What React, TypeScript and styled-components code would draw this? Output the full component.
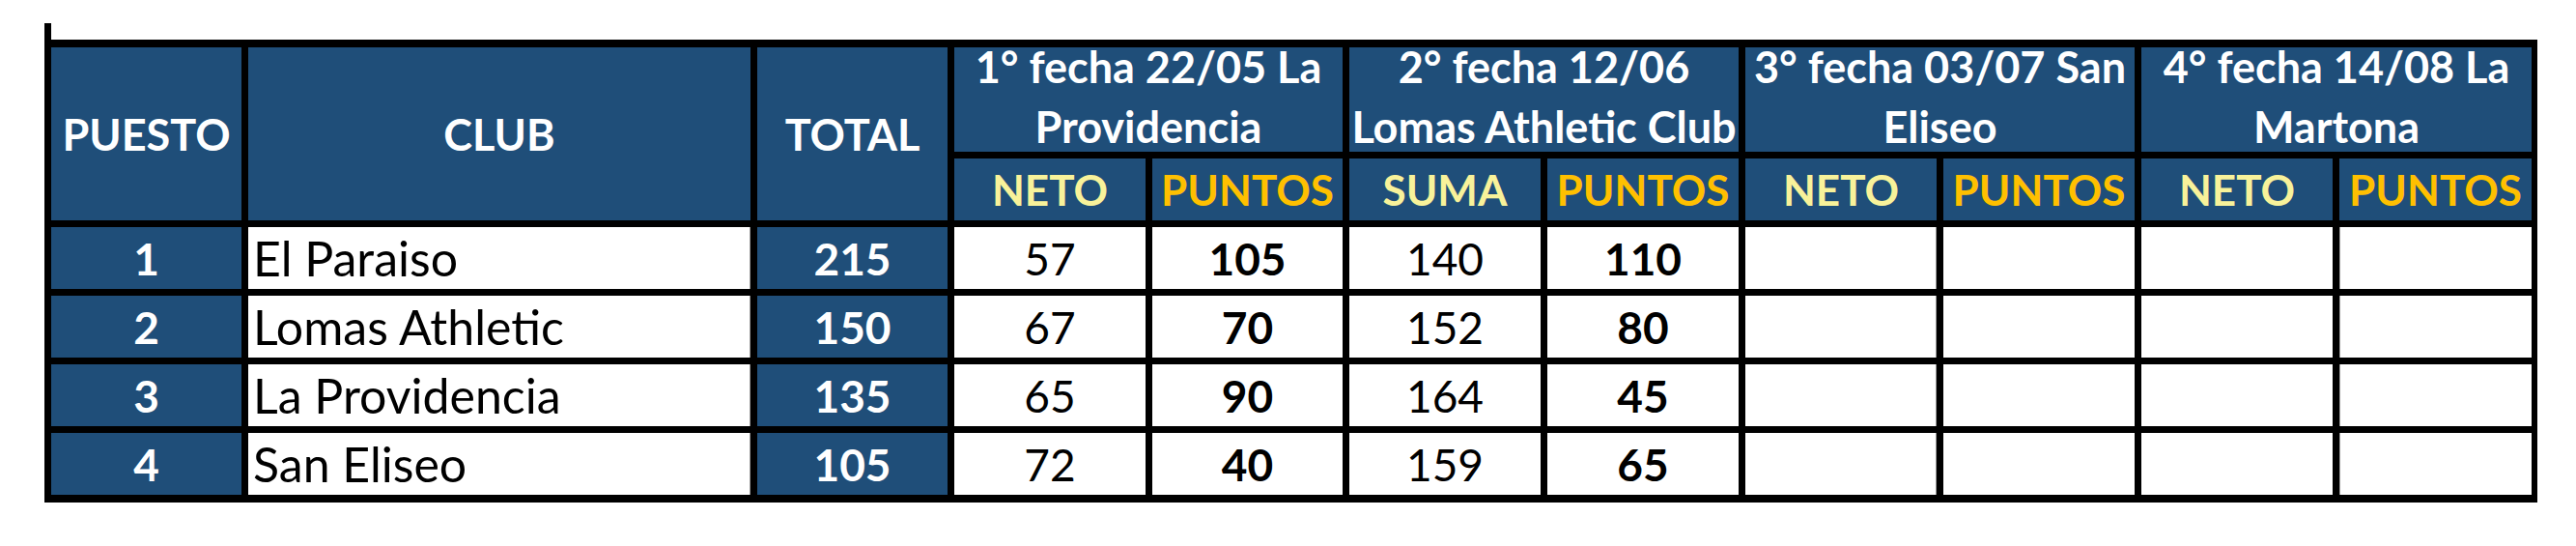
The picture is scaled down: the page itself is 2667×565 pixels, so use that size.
import React from "react";
import styled, { createGlobalStyle } from "styled-components";

const BLUE = "#1F4E79";
const LIGHT_YELLOW = "#F8F29A";
const GOLD = "#FFC000";

const GlobalStyle = createGlobalStyle`
  html, body {
    margin: 0;
    padding: 0;
    background: #ffffff;
  }
  body {
    font-family: "Lato", "Open Sans", sans-serif;
  }
`;

const Page = styled.div`
  padding: 24px 0 0 46px;
`;

const Stub = styled.div`
  width: 7px;
  height: 17px;
  background: #000;
`;

const Grid = styled.div`
  display: grid;
  width: max-content;
  grid-template-columns: 197px 520px 197px 198px 197px 198px 198px 198px 198px 198px 199px;
  grid-template-rows: 108px 64px 64px 64px 64px 64px;
  gap: 7px;
  padding: 8px 6px 8px 7px;
  background: #000;
`;

const Cell = styled.div`
  display: flex;
  align-items: center;
  justify-content: center;
  box-sizing: border-box;
  white-space: nowrap;
  overflow: visible;
`;

const HeadCell = styled(Cell)<{ $rows?: number }>`
  grid-row: span ${(p) => p.$rows ?? 1};
  background: ${BLUE};
  color: #ffffff;
  font-weight: 700;
  font-size: 45px;
`;

const GroupCell = styled(Cell)`
  grid-column: span 2;
  background: ${BLUE};
  color: #ffffff;
  font-weight: 700;
  font-size: 45px;
  line-height: 62px;
  text-align: center;
  padding-bottom: 6px;
`;

const SubHead = styled(Cell)<{ $tone: "light" | "gold" }>`
  background: ${BLUE};
  color: ${(p) => (p.$tone === "gold" ? GOLD : LIGHT_YELLOW)};
  font-weight: 700;
  font-size: 44px;
`;

const RankCell = styled(Cell)`
  background: ${BLUE};
  color: #ffffff;
  font-weight: 700;
  font-size: 46px;
`;

const ClubCell = styled(Cell)`
  justify-content: flex-start;
  padding-left: 5px;
  background: #ffffff;
  color: #000000;
  font-size: 50px;
  box-shadow: inset -1px 0 0 #9a9a9a;
`;

const TotalCell = styled(Cell)`
  background: ${BLUE};
  color: #ffffff;
  font-weight: 700;
  font-size: 46px;
`;

const ValueCell = styled(Cell)<{ $bold?: boolean; $edge?: "left" | "right" }>`
  background: #ffffff;
  color: #000000;
  font-weight: ${(p) => (p.$bold ? 700 : 400)};
  font-size: 46px;
  box-shadow: ${(p) =>
    p.$edge === "right"
      ? "inset -1px 0 0 #9a9a9a"
      : p.$edge === "left"
      ? "inset 1px 0 0 #9a9a9a"
      : "none"};
`;

type Row = {
  rank: number;
  club: string;
  total: number;
  neto1: number;
  pts1: number;
  suma2: number;
  pts2: number;
};

const rows: Row[] = [
  { rank: 1, club: "El Paraiso", total: 215, neto1: 57, pts1: 105, suma2: 140, pts2: 110 },
  { rank: 2, club: "Lomas Athletic", total: 150, neto1: 67, pts1: 70, suma2: 152, pts2: 80 },
  { rank: 3, club: "La Providencia", total: 135, neto1: 65, pts1: 90, suma2: 164, pts2: 45 },
  { rank: 4, club: "San Eliseo", total: 105, neto1: 72, pts1: 40, suma2: 159, pts2: 65 },
];

const groups: [string, string][] = [
  ["1° fecha 22/05 La", "Providencia"],
  ["2° fecha 12/06", "Lomas Athletic Club"],
  ["3° fecha 03/07 San", "Eliseo"],
  ["4° fecha 14/08 La", "Martona"],
];

const subHeads: { label: string; tone: "light" | "gold" }[] = [
  { label: "NETO", tone: "light" },
  { label: "PUNTOS", tone: "gold" },
  { label: "SUMA", tone: "light" },
  { label: "PUNTOS", tone: "gold" },
  { label: "NETO", tone: "light" },
  { label: "PUNTOS", tone: "gold" },
  { label: "NETO", tone: "light" },
  { label: "PUNTOS", tone: "gold" },
];

export default function App() {
  return (
    <>
      <GlobalStyle />
      <Page>
        <Stub />
        <Grid>
          <HeadCell $rows={2}>PUESTO</HeadCell>
          <HeadCell $rows={2}>CLUB</HeadCell>
          <HeadCell $rows={2}>TOTAL</HeadCell>
          {groups.map(([a, b]) => (
            <GroupCell key={a}>
              <div>
                {a}
                <br />
                {b}
              </div>
            </GroupCell>
          ))}
          {subHeads.map((s, i) => (
            <SubHead key={i} $tone={s.tone}>
              {s.label}
            </SubHead>
          ))}
          {rows.map((r) => (
            <React.Fragment key={r.rank}>
              <RankCell>{r.rank}</RankCell>
              <ClubCell>{r.club}</ClubCell>
              <TotalCell>{r.total}</TotalCell>
              <ValueCell>{r.neto1}</ValueCell>
              <ValueCell $bold>{r.pts1}</ValueCell>
              <ValueCell>{r.suma2}</ValueCell>
              <ValueCell $bold>{r.pts2}</ValueCell>
              <ValueCell $edge="right" />
              <ValueCell />
              <ValueCell />
              <ValueCell $edge="left" />
            </React.Fragment>
          ))}
        </Grid>
      </Page>
    </>
  );
}
